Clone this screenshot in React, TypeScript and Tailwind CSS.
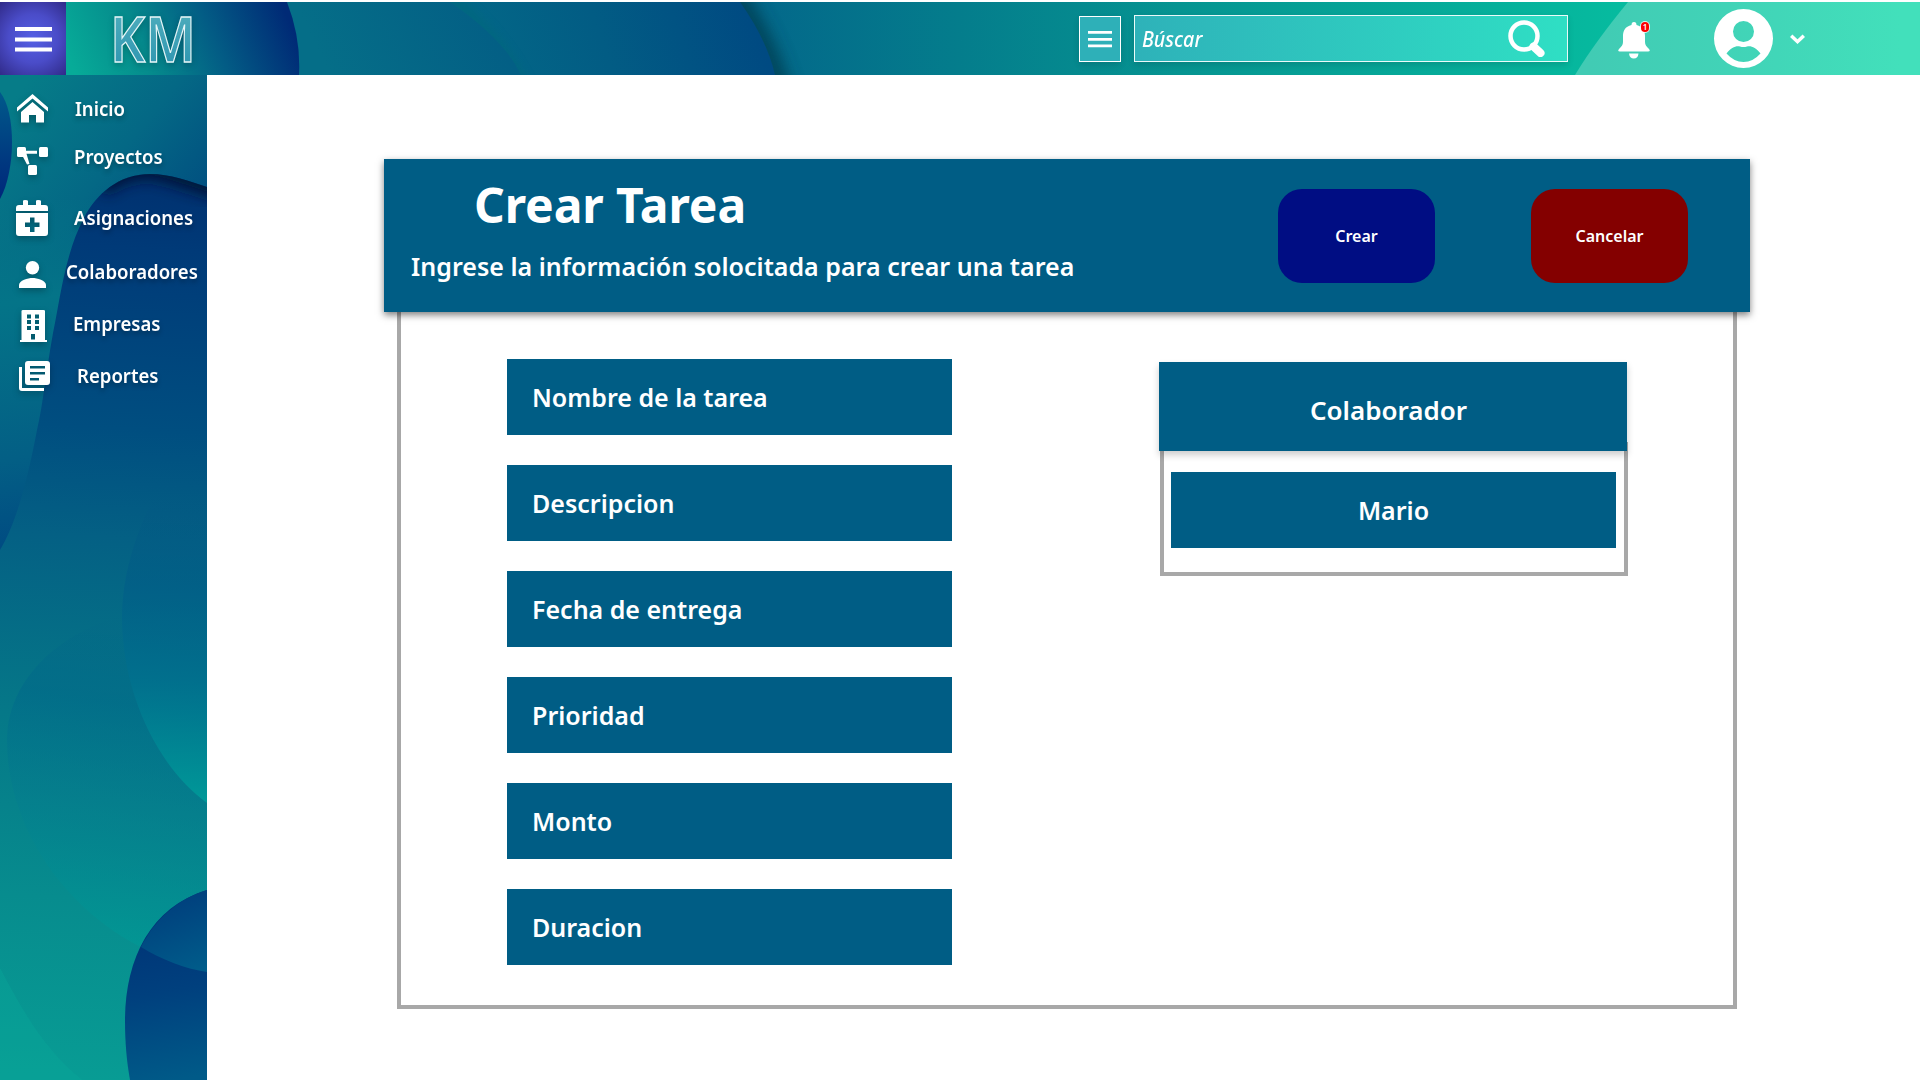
import type { ReactNode } from "react";

function SidebarArt() {
  return (
    <svg className="absolute inset-0 h-full w-full" viewBox="0 75 207 1005" preserveAspectRatio="none" aria-hidden="true">
      <defs>
        <linearGradient id="sTop" gradientUnits="userSpaceOnUse" x1="20" y1="90" x2="200" y2="240">
          <stop offset="0" stopColor="#067c88" />
          <stop offset="0.5" stopColor="#046885" />
          <stop offset="1" stopColor="#00497f" />
        </linearGradient>
        <linearGradient id="sLeft" gradientUnits="userSpaceOnUse" x1="0" y1="200" x2="50" y2="540">
          <stop offset="0" stopColor="#047888" stopOpacity="0" />
          <stop offset="0.3" stopColor="#047488" />
          <stop offset="0.75" stopColor="#035f85" />
          <stop offset="1" stopColor="#004c82" />
        </linearGradient>
        <linearGradient id="sWave" gradientUnits="userSpaceOnUse" x1="130" y1="175" x2="80" y2="1080">
          <stop offset="0" stopColor="#00306f" />
          <stop offset="0.08" stopColor="#003a78" />
          <stop offset="0.28" stopColor="#004e80" />
          <stop offset="0.4" stopColor="#046084" />
          <stop offset="0.6" stopColor="#057888" />
          <stop offset="0.8" stopColor="#078c8e" />
          <stop offset="1" stopColor="#089c94" />
        </linearGradient>
        <linearGradient id="sBig" gradientUnits="userSpaceOnUse" x1="150" y1="620" x2="110" y2="960">
          <stop offset="0" stopColor="#005f88" stopOpacity="0" />
          <stop offset="0.25" stopColor="#00688a" stopOpacity="0.55" />
          <stop offset="0.55" stopColor="#047c8e" stopOpacity="0.5" />
          <stop offset="1" stopColor="#009c96" stopOpacity="0.7" />
        </linearGradient>
        <linearGradient id="sRight" gradientUnits="userSpaceOnUse" x1="190" y1="500" x2="175" y2="800">
          <stop offset="0" stopColor="#004f84" stopOpacity="0" />
          <stop offset="0.3" stopColor="#005c88" stopOpacity="0.6" />
          <stop offset="0.6" stopColor="#00708e" stopOpacity="0.8" />
          <stop offset="1" stopColor="#009898" />
        </linearGradient>
        <linearGradient id="sDark" gradientUnits="userSpaceOnUse" x1="150" y1="935" x2="175" y2="1080">
          <stop offset="0" stopColor="#003678" />
          <stop offset="0.4" stopColor="#00407e" />
          <stop offset="1" stopColor="#005a88" />
        </linearGradient>
        <linearGradient id="sCap" gradientUnits="userSpaceOnUse" x1="170" y1="890" x2="200" y2="970">
          <stop offset="0" stopColor="#003c7c" />
          <stop offset="1" stopColor="#005c8a" />
        </linearGradient>
        <linearGradient id="sOrb" gradientUnits="userSpaceOnUse" x1="0" y1="95" x2="0" y2="200">
          <stop offset="0" stopColor="#00588a" />
          <stop offset="1" stopColor="#00267a" />
        </linearGradient>
        <filter id="soft" x="-30%" y="-60%" width="160%" height="220%">
          <feGaussianBlur stdDeviation="7" />
        </filter>
        <clipPath id="waveClip">
          <path d="M207 187C189 181 170 174 150 174C119 174 96 194 84 218C65 253 60 300 53 333C46 372 43 405 37 430C29 472 18 520 0 550V1080H207Z" />
        </clipPath>
      </defs>
      <rect y="75" width="207" height="1005" fill="url(#sTop)" />
      <rect y="200" width="120" height="360" fill="url(#sLeft)" />
      <path d="M0 92C16 112 16 170 0 199Z" fill="url(#sOrb)" />
      <g clipPath="url(#waveClip)">
        <rect y="170" width="207" height="910" fill="url(#sWave)" />
        <path d="M100 186C118 168 145 164 165 170L235 192" fill="none" stroke="#001536" strokeWidth="24" opacity="0.9" filter="url(#soft)" />
        <path d="M230 600C80 600 7 670 7 740C7 850 100 960 230 974Z" fill="url(#sBig)" />
        <path d="M207 430C150 480 122 560 122 617C122 690 155 765 207 803Z" fill="url(#sRight)" />
        <path d="M0 968C25 1015 45 1050 82 1080H0Z" fill="#0aa89a" opacity="0.35" />
      </g>
      <path d="M207 890C150 907 125 960 125 1020C125 1045 127 1063 130 1080H207Z" fill="url(#sDark)" />
      <path d="M207 890C178 899 155 919 141 947C162 960 186 969 207 972Z" fill="url(#sCap)" />
    </svg>
  );
}

function HeaderArt() {
  return (
    <svg className="absolute inset-0 h-full w-full" viewBox="0 2 1920 73" preserveAspectRatio="none" aria-hidden="true">
      <defs>
        <linearGradient id="hBase" gradientUnits="userSpaceOnUse" x1="740" y1="0" x2="1620" y2="0">
          <stop offset="0" stopColor="#03668a" />
          <stop offset="0.25" stopColor="#047d8c" />
          <stop offset="0.5" stopColor="#069491" />
          <stop offset="1" stopColor="#06bb9f" />
        </linearGradient>
        <linearGradient id="hThird" gradientUnits="userSpaceOnUse" x1="455" y1="80" x2="740" y2="-20">
          <stop offset="0" stopColor="#036a88" />
          <stop offset="0.5" stopColor="#025c84" />
          <stop offset="1" stopColor="#004a82" />
        </linearGradient>
        <linearGradient id="hSecond" gradientUnits="userSpaceOnUse" x1="330" y1="75" x2="480" y2="0">
          <stop offset="0" stopColor="#056e88" />
          <stop offset="1" stopColor="#035f85" />
        </linearGradient>
        <linearGradient id="hFirst" gradientUnits="userSpaceOnUse" x1="80" y1="85" x2="280" y2="0">
          <stop offset="0" stopColor="#07ab98" />
          <stop offset="0.33" stopColor="#058a8c" />
          <stop offset="0.65" stopColor="#035c85" />
          <stop offset="1" stopColor="#002a76" />
        </linearGradient>
        <linearGradient id="hLight" gradientUnits="userSpaceOnUse" x1="1590" y1="0" x2="1900" y2="0">
          <stop offset="0" stopColor="#41cbb4" />
          <stop offset="0.6" stopColor="#41d6b8" />
          <stop offset="1" stopColor="#42e0bb" />
        </linearGradient>
        <filter id="hSoft" x="-100%" y="-30%" width="300%" height="160%">
          <feGaussianBlur stdDeviation="8" />
        </filter>
        <filter id="hFaint" x="-100%" y="-30%" width="300%" height="160%">
          <feGaussianBlur stdDeviation="5" />
        </filter>
      </defs>
      <rect y="2" width="1920" height="73" fill="url(#hBase)" />
      <path d="M728 -15Q768 40 782 95" fill="none" stroke="#003848" strokeWidth="20" opacity="0.75" filter="url(#hSoft)" />
      <path d="M0 2H740Q767 40 775 75H0Z" fill="url(#hThird)" />
      <path d="M440 -12Q500 36 526 90" fill="none" stroke="#06677c" strokeWidth="10" opacity="0.7" filter="url(#hFaint)" />
      <path d="M0 2H450Q505 40 521 75H0Z" fill="url(#hSecond)" />
      <path d="M0 2H287Q301 38 299 75H0Z" fill="url(#hFirst)" />
      <path d="M1628 2Q1595 42 1575 75H1920V2Z" fill="url(#hLight)" />
    </svg>
  );
}

type Item = { label: string; row: string; icon: ReactNode; iconBox: string };

const items: Item[] = [
  {
    label: "Inicio",
    row: "h-[48px] pl-[17px]",
    iconBox: "w-[58px] pb-[2px]",
    icon: (
      <svg width="31" height="29" viewBox="0 0 31 29" fill="white">
        <path d="M0 13.5L15.5 0L31 13.5V17.5L15.5 4.5L0 17.5Z" />
        <path d="M15.5 8L27 18V28.500H19V21H12V28.500H4V18Z" />
      </svg>
    ),
  },
  {
    label: "Proyectos",
    row: "h-[48px] pl-[17px]",
    iconBox: "w-[57px] pt-2",
    icon: (
      <svg width="31" height="28" viewBox="0 0 31 28" fill="white">
        <rect width="9" height="10" rx="1.500" />
        <rect x="22" width="9" height="10" rx="1.500" />
        <rect x="11" y="18" width="9" height="10" rx="1.500" />
        <path d="M8 3.700H20V6.700H9.500L12.500 17L10 17.500L5 8Z" />
      </svg>
    ),
  },
  {
    label: "Asignaciones",
    row: "mt-[13px] h-[48px] pl-[16px]",
    iconBox: "w-[58px]",
    icon: (
      <svg width="32" height="36" viewBox="0 0 32 36" fill="white">
        <path d="M0 11V8Q0 5 3 5H7V1Q7 0 9 0Q12 0 12 1V5H20V1Q20 0 22 0Q25 0 25 1V5H29Q32 5 32 8V11Z" />
        <path fillRule="evenodd" d="M0 13H32V33Q32 36 29 36H3Q0 36 0 33ZM14 17.500V22.500H9V27H14V32H18.500V27H23.500V22.500H18.500V17.500Z" />
      </svg>
    ),
  },
  {
    label: "Colaboradores",
    row: "mt-[6px] h-[48px] pl-[19px]",
    iconBox: "w-[47px] pt-1",
    icon: (
      <svg width="27" height="27" viewBox="0 0 27 27" fill="white">
        <circle cx="13.500" cy="6.700" r="6.700" />
        <path d="M0 27V24C0 19.500 9 17 13.500 17S27 19.500 27 24V27Z" />
      </svg>
    ),
  },
  {
    label: "Empresas",
    row: "mt-[4px] h-[48px] pl-[20px]",
    iconBox: "w-[53px] pt-1",
    icon: (
      <svg width="27" height="32" viewBox="0 0 27 32" fill="white">
        <path
          fillRule="evenodd"
          d="M1.500 1Q1.500 0 3 0H23.500Q25 0 25 1V30H27V32H0V30H1.500ZM7 4.500V8.500H11V4.500ZM15 4.500V8.500H19V4.500ZM7 10V14H11V10ZM15 10V14H19V10ZM7 16V20H11V16ZM15 16V20H19V16ZM11 24V29.500H15V24Z"
        />
      </svg>
    ),
  },
  {
    label: "Reportes",
    row: "mt-[4px] h-[48px] pl-[19px]",
    iconBox: "w-[58px]",
    icon: (
      <svg width="31" height="30" viewBox="0 0 31 30" fill="white">
        <path fillRule="evenodd" d="M9 0H28Q31 0 31 3V21Q31 24 28 24H9Q6 24 6 21V3Q6 0 9 0ZM11 5V7.500H26V5ZM11 11V13.500H26V11ZM11 17V19.500H20V17Z" />
        <path d="M0 6H3V27H25V30H3Q0 30 0 27Z" />
      </svg>
    ),
  },
];

const fields = ["Nombre de la tarea", "Descripcion", "Fecha de entrega", "Prioridad", "Monto", "Duracion"];

function Header() {
  return (
    <header className="relative mt-[2px] h-[73px] w-full">
      <HeaderArt />
      <div className="relative flex h-full items-start text-white">
        <button className="flex h-[73px] w-[66px] items-center justify-center bg-[radial-gradient(circle,#5560e4_0%,#4a4cc8_50%,#302a88_100%)] pt-px">
          <svg width="37" height="25" viewBox="0 0 37 25" fill="white">
            <path d="M0 0H37V4H0ZM0 10.500H37V14.500H0ZM0 20.500H37V24.500H0Z" />
          </svg>
        </button>
        <svg className="ml-[39px] h-[73px] w-[95px] overflow-visible drop-shadow-[0_2px_3px_rgba(0,0,0,0.2)]" viewBox="-5 0 95 73">
          <defs>
            <linearGradient id="km" x1="0" y1="0" x2="0" y2="1">
              <stop offset="0" stopColor="#58b4c0" />
              <stop offset="1" stopColor="#2790ae" />
            </linearGradient>
          </defs>
          <text x="0" y="60" textLength="86" lengthAdjust="spacingAndGlyphs" fill="url(#km)" stroke="#e6f6f8" strokeWidth="1.300" fontFamily="Noto Sans, sans-serif" fontWeight="600" fontSize="64">
            KM
          </text>
        </svg>
        <button className="ml-[879px] mt-[14px] flex h-[46px] w-[42px] items-center justify-center border border-white bg-[#2eb0b8] shadow-[0_3px_6px_rgba(0,0,0,0.12)]">
          <svg width="24" height="17" viewBox="0 0 24 17" fill="white">
            <path d="M0 0H24V2.700H0ZM0 7H24V9.700H0ZM0 13.500H24V16.200H0Z" />
          </svg>
        </button>
        <div className="ml-[13px] mt-[13px] flex h-[47px] w-[434px] items-center border border-white/90 bg-gradient-to-r from-[#2eb2b9] to-[#2fdfc4] pl-[7px] shadow-[0_3px_6px_rgba(0,0,0,0.12)]">
          <span className="mb-[2px] w-[366px] origin-left scale-x-[0.89] font-['Noto_Sans'] text-[22px] leading-none font-medium italic">Búscar</span>
          <svg width="37" height="37" viewBox="0 0 37 37" fill="none" stroke="white" className="shrink-0">
            <circle cx="16" cy="16" r="13.500" strokeWidth="4.500" />
            <path d="M25.500 26.500L32.500 33" strokeWidth="8" strokeLinecap="round" />
          </svg>
        </div>
        <div className="relative ml-[50px] mt-[20px] h-[37px] w-[32px]">
          <svg width="32" height="37" viewBox="0 0 32 37" fill="white">
            <path d="M16 0Q18.500 0 18.500 3C25 4.500 27 9 27 14V20C27 23 28.500 24.500 31 27Q33 29.500 30 29.500H2Q-1 29.500 1 27C3.500 24.500 5 23 5 20V14C5 9 7 4.500 13.500 3Q13.500 0 16 0ZM11 31.500H20.500Q20 36.500 15.800 36.500T11 31.500Z" />
          </svg>
          <span className="absolute right-px top-0 flex h-[10px] w-[8px] items-center justify-center rounded-full bg-[#fb0000] font-['Noto_Sans'] text-[8px] leading-none font-semibold ring-1 ring-white/80">1</span>
        </div>
        <svg className="ml-[64px] mt-[7px]" width="59" height="59" viewBox="0 0 59 59" fill="white">
          <path
            fillRule="evenodd"
            d="M29.500 0A29.500 29.500 0 1 1 29.500 59A29.500 29.500 0 1 1 29.500 0ZM29.500 12A10.500 10.500 0 1 0 29.500 33A10.500 10.500 0 1 0 29.500 12ZM12.500 44.500Q20 53 29.500 53T46.500 44.500C42 38.500 37 36.500 33 37.500Q29.500 38.500 26 37.500C22 36.500 17 38.500 12.500 44.500Z"
          />
        </svg>
        <svg className="ml-[17px] mt-[32px]" width="15" height="11" viewBox="0 0 15 11" fill="none" stroke="white" strokeWidth="3.500">
          <path d="M1.200 1.700L7.500 7.700L13.800 1.700" />
        </svg>
      </div>
    </header>
  );
}

function Sidebar() {
  return (
    <aside className="relative h-[1005px] w-[207px] shrink-0 overflow-hidden">
      <SidebarArt />
      <ul className="relative pt-[10px] text-white">
        {items.map((it) => (
          <li key={it.label} className={`flex items-center ${it.row}`}>
            <span className={`shrink-0 drop-shadow-[0_3px_3px_rgba(0,0,0,0.25)] ${it.iconBox}`}>{it.icon}</span>
            <span className="origin-left scale-x-[0.952] font-['Noto_Sans'] text-[19.500px] leading-none font-semibold [text-shadow:0_3px_5px_rgba(0,0,0,0.3)]">{it.label}</span>
          </li>
        ))}
      </ul>
    </aside>
  );
}

export default function App() {
  return (
    <div className="flow-root h-[1080px] w-[1920px] overflow-hidden bg-white font-['Noto_Sans',sans-serif]">
      <Header />
      <div className="flex">
        <Sidebar />
        <main className="pl-[177px] pt-[84px] text-white">
          <section className="relative z-10 flex h-[153px] w-[1366px] bg-[#005d85] shadow-[0_3px_7px_rgba(0,0,0,0.5)]">
            <div className="w-[894px] pl-[27px]">
              <h1 className="mt-[14px] pl-[63px] text-[48px] leading-[64px] font-bold tracking-[-0.1px]">Crear Tarea</h1>
              <p className="mt-[12px] text-[25px] leading-[34px] font-semibold tracking-[0.02px]">Ingrese la información solocitada para crear una tarea</p>
            </div>
            <button className="mt-[30px] h-[94px] w-[157px] rounded-[24px] bg-[#000d83] text-[16px] font-semibold">Crear</button>
            <button className="mt-[30px] ml-[96px] h-[94px] w-[157px] rounded-[24px] bg-[#840000] text-[16px] font-semibold">Cancelar</button>
          </section>
          <section className="ml-[13px] flex h-[697px] w-[1340px] items-start border-4 border-t-0 border-[#a8a8a8] pl-[106px]">
            <div className="mt-[47px] flex w-[445px] flex-col gap-[30px]">
              {fields.map((f) => (
                <div key={f} className="flex h-[76px] items-center bg-[#005d85] pt-[2px] pl-[25px] text-[25px] font-semibold">
                  {f}
                </div>
              ))}
            </div>
            <div className="mt-[50px] ml-[207px] w-[469px]">
              <div className="relative z-10 flex h-[89px] w-[468px] items-center justify-center bg-[#005d85] pt-[8px] pr-[9px] text-[26px] font-semibold shadow-[0_4px_7px_rgba(0,0,0,0.2)]">
                Colaborador
              </div>
              <div className="-mt-[9px] ml-px h-[134px] border-4 border-t-0 border-[#a8a8a8] pt-[30px] pl-[7px]">
                <div className="flex h-[76px] w-[445px] items-center justify-center bg-[#005d85] pt-[2px] text-[25px] font-semibold">Mario</div>
              </div>
            </div>
          </section>
        </main>
      </div>
    </div>
  );
}
